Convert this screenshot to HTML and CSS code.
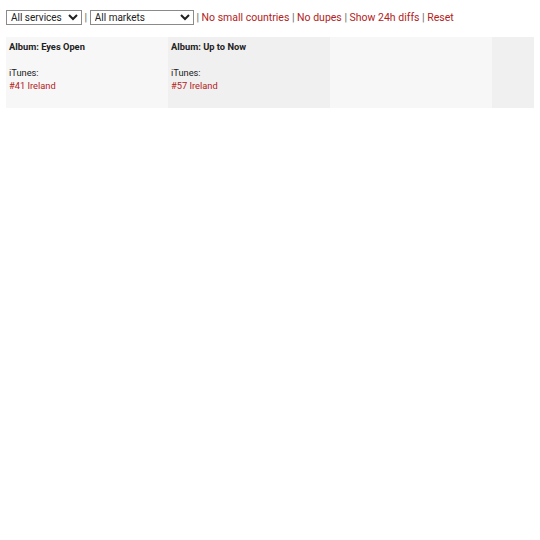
FILE: index.html
```html
<!DOCTYPE HTML>
<html>
  <head>
    <meta charset="UTF-8">
    <title>chart positions</title>
    <link rel="stylesheet" href="styles.css">
  </head>
  <body>
    <div class="filtri">
      <select class="scelta servizi">
        <option>All services</option>
      </select> |
      <select class="scelta mercati">
        <option>All markets</option>
      </select> |
      <a href="#">No small countries</a> |
      <a href="#">No dupes</a> |
      <a href="#">Show 24h diffs</a> |
      <a href="#">Reset</a>
    </div>

    <table class="griglia">
      <tr>
        <td class="chiaro">
          <strong>Album: Eyes Open</strong><br><br>
          iTunes:<br>
          <a href="#">#41 Ireland</a><br><br>
        </td>
        <td class="scuro">
          <strong>Album: Up to Now</strong><br><br>
          iTunes:<br>
          <a href="#">#57 Ireland</a><br><br>
        </td>
        <td class="chiaro"></td>
        <td class="scuro ultima"></td>
      </tr>
    </table>
  </body>
</html>
```

FILE: styles.css
```css
body {
  margin: 6px;
  font-family: Roboto, "Liberation Sans", sans-serif;
  font-size: 10.5px;
  color: #222222;
}

a {
  color: #b22222; /* rosso scuro */
  text-decoration: none;
}

.filtri {
  padding-top: 4px;
  color: #666666;
}

.scelta {
  font-family: Roboto, "Liberation Sans", sans-serif;
  font-size: 10px;
  color: #222222;
  background: #ffffff;
  border: 1px solid #8a8a8a;
  border-radius: 0;
  height: 15px;
  padding: 0;
}

.servizi {
  width: 76px;
}

.mercati {
  width: 104px;
}

.griglia {
  margin-top: 12px;
  margin-right: -6px;
  border-collapse: collapse;
  table-layout: fixed;
  width: calc(100% + 6px);
}

.griglia td {
  width: 156px;
  vertical-align: top;
  padding: 3px;
  font-size: 9.3px;
  line-height: 13px;
}

.griglia td.ultima {
  width: auto;
}

.chiaro {
  background-color: #f7f7f7;
}

.scuro {
  background-color: #f0f0f0;
}
```
